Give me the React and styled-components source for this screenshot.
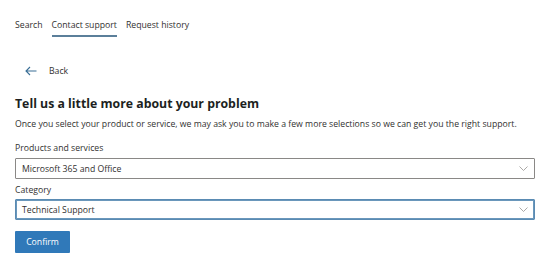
import React from "react";
import styled, { createGlobalStyle } from "styled-components";

const Global = createGlobalStyle`
  html, body { margin: 0; padding: 0; background: #fff; }
  body { font-family: "Open Sans", "Noto Sans", sans-serif; color: #323130; }
`;

const Page = styled.div`
  width: 545px;
  height: 267px;
  box-sizing: border-box;
  padding: 0 10px 0 15px;
  display: flex;
  flex-direction: column;
`;

const Tabs = styled.nav`
  display: flex;
  gap: 9px;
  padding-top: 18px;
`;

const Tab = styled.div`
  font-size: 8.7px;
  line-height: 14px;
  color: #323130;
  padding-bottom: 3px;
  border-bottom: 2px solid ${(p) => (p.$active ? "#5b7f9a" : "transparent")};
`;

const BackRow = styled.div`
  display: flex;
  align-items: center;
  gap: 12px;
  margin-top: 27px;
  margin-left: 10px;
  font-size: 8.7px;
  line-height: 14px;
  color: #323130;
`;

const Heading = styled.h1`
  margin: 17px 0 0;
  font-size: 12.3px;
  line-height: 18px;
  font-weight: 700;
  color: #201f1e;
`;

const Desc = styled.p`
  margin: 4px 0 0;
  font-size: 8.7px;
  line-height: 14px;
  white-space: nowrap;
`;

const Label = styled.div`
  margin-top: ${(p) => p.$mt}px;
  font-size: 8.7px;
  line-height: 14px;
`;

const Select = styled.div`
  margin-top: ${(p) => p.$mt}px;
  height: 21px;
  box-sizing: border-box;
  border: 1px solid ${(p) => (p.$focus ? "#5a8bb3" : "#8a8886")};
  box-shadow: ${(p) => (p.$focus ? "inset 0 0 0 1px #6a97bb" : "none")};
  border-radius: 1px;
  display: flex;
  align-items: center;
  justify-content: space-between;
  padding: 0 6px 0 6px;
  font-size: 8.7px;
`;

const Button = styled.button`
  margin-top: 11px;
  width: 55px;
  height: 22px;
  border: none;
  background: #3079b9;
  color: #fff;
  font-family: inherit;
  font-size: 8.7px;
  padding: 0;
  border-radius: 1px;
`;

const Chevron = () => (
  <svg width="9" height="5" viewBox="0 0 9 5">
    <path d="M0.5 0.5l4 4 4-4" fill="none" stroke="#a19f9d" strokeWidth="0.9" />
  </svg>
);

const Arrow = () => (
  <svg width="12" height="10" viewBox="0 0 12 10">
    <path d="M11.5 5H1M5 1L1 5l4 4" fill="none" stroke="#3a6f96" strokeWidth="1.1" />
  </svg>
);

export default function App() {
  return (
    <Page>
      <Global />
      <Tabs>
        <Tab>Search</Tab>
        <Tab $active>Contact support</Tab>
        <Tab>Request history</Tab>
      </Tabs>
      <BackRow>
        <Arrow />
        <span>Back</span>
      </BackRow>
      <Heading>Tell us a little more about your problem</Heading>
      <Desc>
        Once you select your product or service, we may ask you to make a few more selections so we can get you the right support.
      </Desc>
      <Label $mt={10}>Products and services</Label>
      <Select $mt={3}>
        <span>Microsoft 365 and Office</span>
        <Chevron />
      </Select>
      <Label $mt={4}>Category</Label>
      <Select $mt={2} $focus>
        <span>Technical Support</span>
        <Chevron />
      </Select>
      <div>
        <Button>Confirm</Button>
      </div>
    </Page>
  );
}
